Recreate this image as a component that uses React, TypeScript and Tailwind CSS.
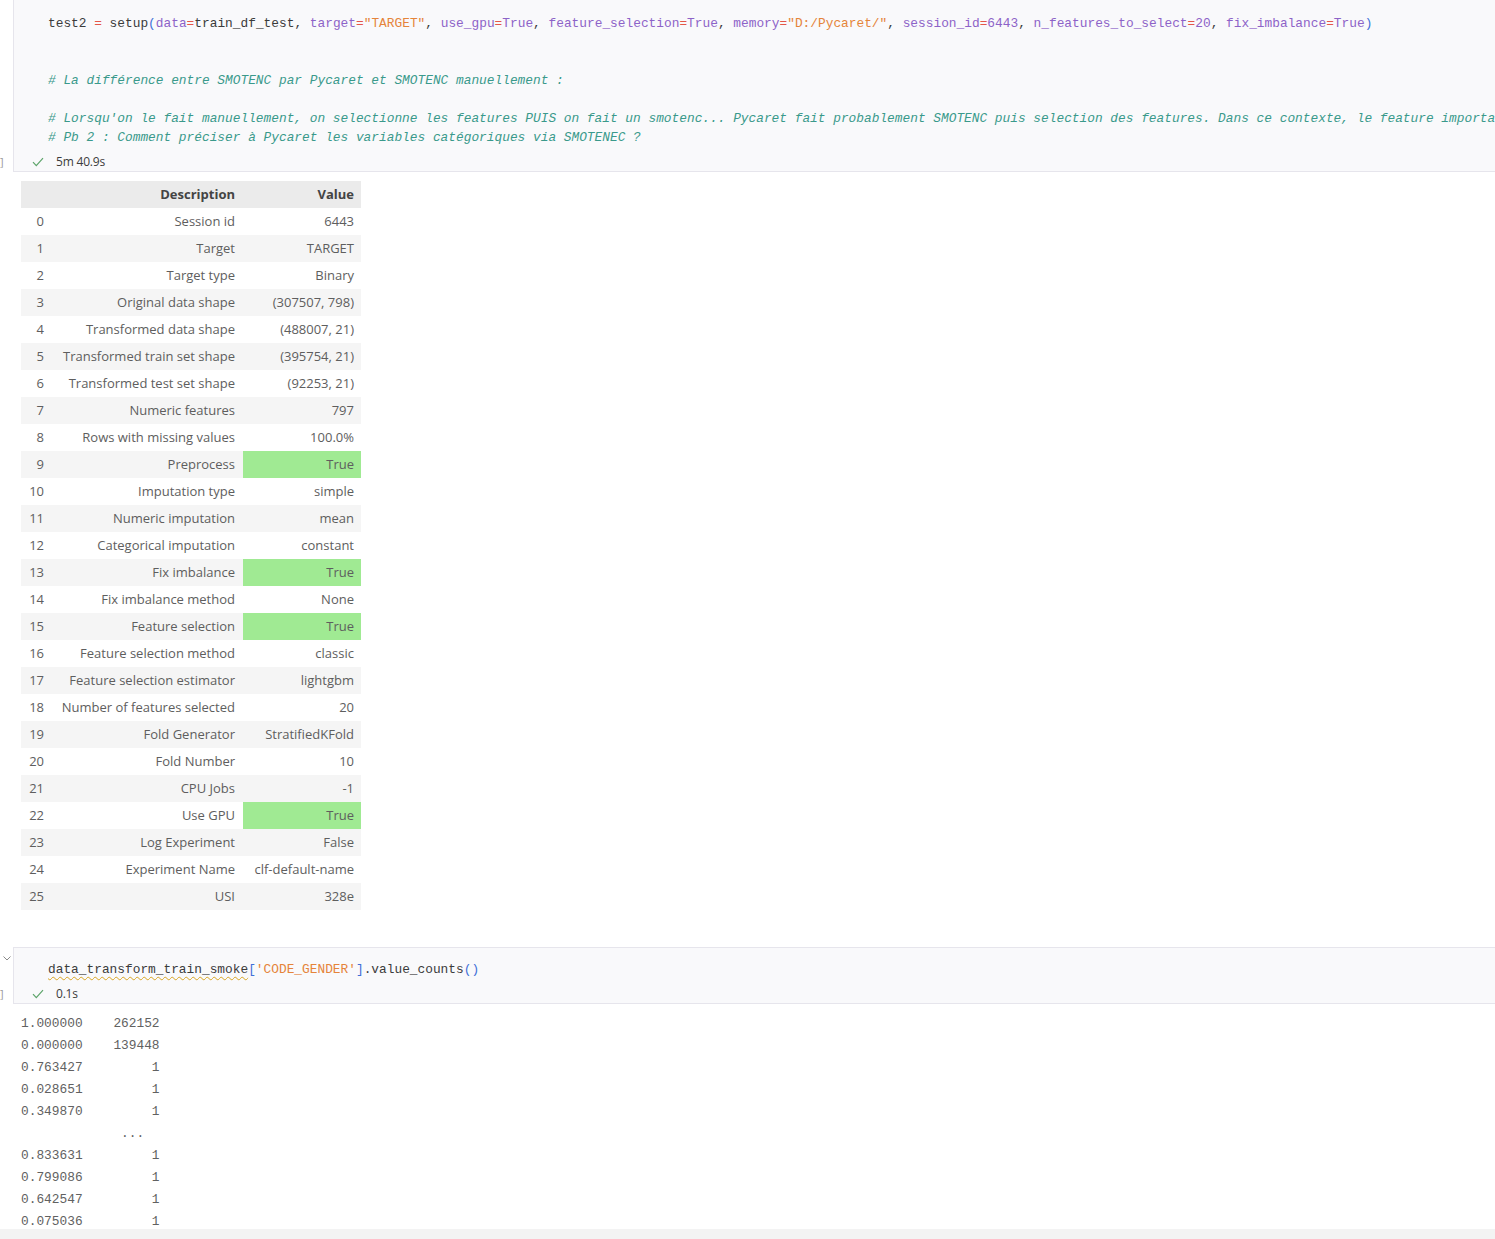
import React from "react";

const P = "text-[#8d63c8]"; // purple params
const R = "text-[#e45649]"; // red operators
const S = "text-[#e5843a]"; // orange strings
const B = "text-[#3f6fd8]"; // blue brackets
const D = "text-[#3b3b3b]"; // default
const C = "text-[#3a998b] italic"; // comment

type Tok = [string, string];

const line1: Tok[] = [
  ["test2 ", D], ["=", R], [" setup", D], ["(", B],
  ["data", P], ["=", R], ["train_df_test, ", D],
  ["target", P], ["=", R], ['"TARGET"', S], [", ", D],
  ["use_gpu", P], ["=", R], ["True", P], [", ", D],
  ["feature_selection", P], ["=", R], ["True", P], [", ", D],
  ["memory", P], ["=", R], ['"D:/Pycaret/"', S], [", ", D],
  ["session_id", P], ["=", R], ["6443", P], [", ", D],
  ["n_features_to_select", P], ["=", R], ["20", P], [", ", D],
  ["fix_imbalance", P], ["=", R], ["True", P], [")", B],
];

const rows: [string, string, boolean?][] = [
  ["Session id", "6443"],
  ["Target", "TARGET"],
  ["Target type", "Binary"],
  ["Original data shape", "(307507, 798)"],
  ["Transformed data shape", "(488007, 21)"],
  ["Transformed train set shape", "(395754, 21)"],
  ["Transformed test set shape", "(92253, 21)"],
  ["Numeric features", "797"],
  ["Rows with missing values", "100.0%"],
  ["Preprocess", "True", true],
  ["Imputation type", "simple"],
  ["Numeric imputation", "mean"],
  ["Categorical imputation", "constant"],
  ["Fix imbalance", "True", true],
  ["Fix imbalance method", "None"],
  ["Feature selection", "True", true],
  ["Feature selection method", "classic"],
  ["Feature selection estimator", "lightgbm"],
  ["Number of features selected", "20"],
  ["Fold Generator", "StratifiedKFold"],
  ["Fold Number", "10"],
  ["CPU Jobs", "-1"],
  ["Use GPU", "True", true],
  ["Log Experiment", "False"],
  ["Experiment Name", "clf-default-name"],
  ["USI", "328e"],
];

const mono = { fontFamily: '"Liberation Mono", "DejaVu Sans Mono", monospace' };
const sans = { fontFamily: '"Open Sans", "Noto Sans", sans-serif' };

function Check() {
  return (
    <svg width="12" height="10" viewBox="0 0 12 10" className="shrink-0">
      <path d="M1 5.2 L4.3 8.6 L11 1.2" fill="none" stroke="#5da46a" strokeWidth="1.2" />
    </svg>
  );
}

function Status({ time }: { time: string }) {
  return (
    <div className="flex items-center h-[20px] pt-[1px] pl-[18px] gap-[12px]">
      <Check />
      <span className="text-[12px] text-[#3c3c3c] tracking-[-0.2px]" style={sans}>{time}</span>
    </div>
  );
}

const outLines = [
  "1.000000    262152",
  "0.000000    139448",
  "0.763427         1",
  "0.028651         1",
  "0.349870         1",
  "             ...  ",
  "0.833631         1",
  "0.799086         1",
  "0.642547         1",
  "0.075036         1",
];

export default function App() {
  return (
    <div className="w-[1495px] bg-white overflow-hidden">
      {/* Cell 1 */}
      <div className="flex">
        <div className="w-[13px] flex flex-col justify-end">
          <div className="h-[20px] mb-[1px] flex items-center text-[11px] text-[#9a9a9a] leading-none" style={sans}>]</div>
        </div>
        <div className="flex-1 min-w-0 bg-[#f9f9fb] border-l border-b border-[#e6e5ec] overflow-hidden">
          <div className="pt-[14px] pl-[34px] text-[12.83px] leading-[19px] whitespace-pre" style={mono}>
            <div>{line1.map((t, i) => <span key={i} className={t[1]}>{t[0]}</span>)}</div>
            <div>&nbsp;</div>
            <div>&nbsp;</div>
            <div className={C}># La différence entre SMOTENC par Pycaret et SMOTENC manuellement :</div>
            <div>&nbsp;</div>
            <div className={C}># Lorsqu'on le fait manuellement, on selectionne les features PUIS on fait un smotenc... Pycaret fait probablement SMOTENC puis selection des features. Dans ce contexte, le feature importance</div>
            <div className={C}># Pb 2 : Comment préciser à Pycaret les variables catégoriques via SMOTENEC ?</div>
          </div>
          <div className="mt-[4px]">
            <Status time="5m 40.9s" />
          </div>
        </div>
      </div>

      {/* Output table */}
      <div className="pl-[21px] pt-[9px]">
        <table className="border-collapse text-[13px] text-[#5e5e5e]" style={sans}>
          <thead>
            <tr className="h-[27px] bg-[#ebebeb]">
              <th className="w-[31px]"></th>
              <th className="w-[191px] text-right pr-[8px] font-bold text-[#444]">Description</th>
              <th className="w-[118px] text-right pr-[7px] font-bold text-[#444]">Value</th>
            </tr>
          </thead>
          <tbody>
            {rows.map((r, i) => (
              <tr key={i} className={`h-[27px] ${i % 2 === 1 ? "bg-[#f5f5f5]" : "bg-white"}`}>
                <td className="text-right pr-[8px] font-normal">{i}</td>
                <td className="text-right pr-[8px] whitespace-nowrap">{r[0]}</td>
                <td className={`text-right pr-[7px] whitespace-nowrap ${r[2] ? "bg-[#a0ea93]" : ""}`}>{r[1]}</td>
              </tr>
            ))}
          </tbody>
        </table>
      </div>

      {/* Cell 2 */}
      <div className="flex mt-[37px]">
        <div className="w-[13px] flex flex-col justify-between">
          <svg width="10" height="8" viewBox="0 0 10 8" className="mt-[7px] ml-[2px]">
            <path d="M1.5 2.5 L5 6 L8.5 2.5" fill="none" stroke="#8a8a8a" strokeWidth="1" />
          </svg>
          <div className="h-[20px] mb-[1px] flex items-center text-[11px] text-[#9a9a9a] leading-none" style={sans}>]</div>
        </div>
        <div className="flex-1 min-w-0 bg-[#f9f9fb] border-l border-y border-[#e6e5ec] overflow-hidden">
          <div className="pt-[12px] pl-[34px] text-[12.83px] leading-[19px] whitespace-pre" style={mono}>
            <span className={`${D} underline decoration-wavy decoration-[#d8a521] underline-offset-[3px] decoration-1`}>data_transform_train_smoke</span>
            <span className={B}>[</span>
            <span className={S}>'CODE_GENDER'</span>
            <span className={B}>]</span>
            <span className={D}>.value_counts</span>
            <span className={B}>()</span>
          </div>
          <div className="mt-[4px]">
            <Status time="0.1s" />
          </div>
        </div>
      </div>

      {/* Output text */}
      <div className="h-[225px] overflow-hidden pl-[21px] pt-[9px]">
        <pre className="text-[12.83px] leading-[22px] text-[#616161]" style={mono}>
          {outLines.join("\n")}
        </pre>
      </div>
      <div className="h-[10px] bg-[#f3f3f3]" />
    </div>
  );
}
